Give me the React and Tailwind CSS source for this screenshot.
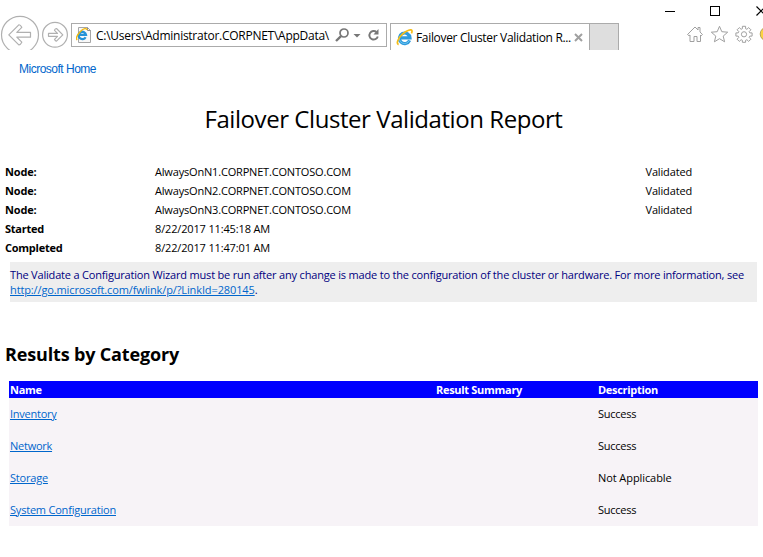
const nodes = ["AlwaysOnN1", "AlwaysOnN2", "AlwaysOnN3"];

const times = [
  ["Started", "8/22/2017 11:45:18 AM"],
  ["Completed", "8/22/2017 11:47:01 AM"],
];

const categories = [
  ["Inventory", "Success", "tracking-[-0.25px]"],
  ["Network", "Success", "tracking-[-0.25px]"],
  ["Storage", "Not Applicable", "tracking-[-0.2px]"],
  ["System Configuration", "Success", "tracking-[-0.205px]"],
];

function IeGlyph({ size }) {
  return (
    <svg width={size} height={size} viewBox="0 0 17 17" fill="none" className="shrink-0">
      <path d="M13.6 11.4A5.300 5.300 0 1 1 14 8.900H4.200" stroke="#2f9bdc" strokeWidth="3.200" />
      <path d="M13.200 11.600A5.200 5.200 0 0 1 3.800 7" stroke="#6cc4f2" strokeWidth="1" />
      <path d="M2.600 15.600C-.2 14.400 2.200 9.200 6.400 5.200S15.600-.4 16 2c.1.800-.2 1.700-.6 2.400" stroke="#f5bd17" strokeWidth="1.700" />
    </svg>
  );
}

function Toolbar() {
  return (
    <header className="h-[50px] overflow-hidden">
      <div className="flex h-[23px] justify-end">
        <svg width="103" height="23" viewBox="660 0 103 23" fill="none" stroke="#000" className="shrink-0">
          <path d="M665 11.500h10" />
          <rect x="710.500" y="6.500" width="9" height="9" />
          <path d="M756.500 6.500l9 9m0-9l-9 9" strokeWidth="1.200" />
        </svg>
      </div>
      <div className="flex h-[27px]">
        <svg width="71" height="27" viewBox="0 23 71 27" fill="none" stroke="#b0b0b0" className="shrink-0 overflow-visible">
          <circle cx="20" cy="34.800" r="18.500" strokeWidth="1.200" />
          <path d="M8.800 34.800L18.800 24.800q1.500-.3 3 2.600l-5 5H30.500v4.800H16.800l5 5q-1.500 2.900-3 2.600z" strokeWidth="1.200" strokeLinejoin="round" />
          <circle cx="55" cy="34.800" r="12.400" strokeWidth="1.200" />
          <path d="M62.800 34.800l-6.300-6.300q-1.300 0-2 1.800l3 3H48.500v3h9l-3 3q.7 1.800 2 1.800z" strokeWidth="1.200" strokeLinejoin="round" />
        </svg>
        <div className="flex h-6 w-[316px] shrink-0 items-center border border-[#ababab] pl-1">
          <svg width="17" height="18" viewBox="0 0 17 18" fill="none" className="shrink-0">
            <path d="M2.500 1.500h9l3 3v12H2.500z" fill="#f8f8f8" stroke="#a6a6a6" />
            <path d="M11.500 1.500v3h3" stroke="#8c8c8c" />
            <path d="M9.600 11.200A3.700 3.700 0 1 1 10 8.900H3.600" stroke="#2492d8" strokeWidth="2.300" />
            <path d="M1.200 14C-.6 12.500 1.400 8.400 4.400 5.400S10.800 1.600 11 4" stroke="#f2b90f" strokeWidth="1.400" />
          </svg>
          <span className="ml-[3px] w-[236px] whitespace-nowrap pt-0.5 text-[12px] leading-4 tracking-[-0.26px]">C:\Users\Administrator.CORPNET\AppData\</span>
          <svg width="50" height="18" viewBox="0 0 50 18" fill="none" stroke="#777" className="ml-[3px] shrink-0">
            <circle cx="9" cy="7" r="4" strokeWidth="1.700" />
            <path d="M6 10.200L1 15" strokeWidth="2.400" />
            <path d="M18.500 8h7L22 11.500z" fill="#777" stroke="none" />
            <path d="M41.500 6A4.300 4.300 0 1 0 42.800 10.500" strokeWidth="1.900" />
            <path d="M43.500 3v5.500H38.500z" fill="#777" stroke="none" />
          </svg>
        </div>
        <div className="ml-[3px] flex h-[27px] w-[200px] shrink-0 items-center border-x border-t border-[#ababab] pl-[5px]">
          <IeGlyph size={17} />
          <span className="ml-[3px] w-[158px] whitespace-nowrap pt-px text-[12px] leading-4 tracking-[-0.325px]">Failover Cluster Validation R...</span>
          <svg width="9" height="9" viewBox="0 0 9 9" className="shrink-0">
            <path d="M1 1l7 7m0-7l-7 7" stroke="#a0a0a0" strokeWidth="2" />
          </svg>
        </div>
        <div className="h-[27px] w-[29px] shrink-0 border-r border-t border-[#ababab] bg-[#dedede]" />
        <svg width="83" height="27" viewBox="680 23 83 27" fill="none" stroke="#a0a0a0" strokeLinejoin="round" className="ml-auto shrink-0">
          <path d="M687.500 34.500l7.500-7.500 3 3v-2.500h2v4.500l2.500 2.500-1.300 1.200-.7-.7v6.500h-3.500v-5h-3v5H690V35l-1 .7z" />
          <path d="M719.500 26.300l2.300 5.400 5.900.5-4.500 3.900 1.400 5.700-5.100-3.100-5.100 3.100 1.400-5.700-4.500-3.900 5.900-.5z" />
          <path d="M742.400 26.300h3.200v2.400l1.300.6 1.800-1.700 2.200 2.200-1.700 1.800.6 1.300h2.300v3.200h-2.300l-.6 1.300 1.700 1.800-2.200 2.200-1.800-1.700-1.300.6v2h-3.200v-2l-1.300-.6-1.800 1.700-2.200-2.200 1.700-1.800-.6-1.300h-2.300v-3.200h2.300l.6-1.300-1.700-1.800 2.200-2.200 1.800 1.700 1.300-.6z" />
          <circle cx="744" cy="34.300" r="2.600" />
          <circle cx="767" cy="34" r="6.800" fill="#fbd341" stroke="#b8a05a" />
        </svg>
      </div>
    </header>
  );
}

export default function App() {
  return (
    <div className="h-[557px] w-[763px] overflow-hidden bg-white font-['Open_Sans',sans-serif] text-[11px] leading-[15px] text-black">
      <Toolbar />
      <a className="ml-[19px] mt-[11px] block w-fit font-['Liberation_Sans',sans-serif] text-[12px] leading-4 tracking-[-0.5px] text-[#0066cc]">Microsoft Home</a>
      <h1 className="ml-[204.500px] mt-[26px] whitespace-nowrap text-[24px] leading-8 tracking-[-0.435px]">Failover Cluster Validation Report</h1>

      <dl className="ml-[5px] mt-[27px]">
        {nodes.map((node) => (
          <div key={node} className="flex h-[19px] items-center">
            <dt className="w-[150px] font-bold tracking-[-0.15px]">Node:</dt>
            <dd className="w-[490.500px] tracking-[-0.18px]">{node}.CORPNET.CONTOSO.COM</dd>
            <dd className="tracking-[-0.15px]">Validated</dd>
          </div>
        ))}
        {times.map(([label, value]) => (
          <div key={label} className="flex h-[19px] items-center">
            <dt className="w-[150px] font-bold tracking-[-0.25px]">{label}</dt>
            <dd className="tracking-[-0.15px]">{value}</dd>
          </div>
        ))}
      </dl>

      <div className="ml-[10px] mt-[5px] h-10 w-[747px] bg-[#eeeeee] pt-[5px] text-[#000080]">
        <p className="whitespace-nowrap tracking-[-0.183px]">The Validate a Configuration Wizard must be run after any change is made to the configuration of the cluster or hardware. For more information, see</p>
        <p className="tracking-[-0.12px]"><a className="text-[#0066cc] underline">http://go.microsoft.com/fwlink/p/?LinkId=280145</a>.</p>
      </div>

      <h2 className="ml-[5px] mt-10 text-[18px] font-bold leading-6 tracking-[-0.16px]">Results by Category</h2>

      <section className="ml-[9px] mt-[15px] w-[749px] bg-[#f7f3f7]">
        <div className="flex h-[17px] items-center bg-[#0000ff] pl-px font-bold tracking-[-0.3px] text-white">
          <span className="w-[426px]">Name</span>
          <span className="w-[162px]">Result Summary</span>
          <span>Description</span>
        </div>
        {categories.map(([name, description, tracking]) => (
          <div key={name} className="flex h-8 items-center pb-0.5 pl-px">
            <span className="w-[588px]">
              <a className={`${tracking} text-[#0066cc] underline`}>{name}</a>
            </span>
            <span className={description === "Success" ? "tracking-[-0.25px]" : "tracking-[-0.08px]"}>{description}</span>
          </div>
        ))}
      </section>
    </div>
  );
}
